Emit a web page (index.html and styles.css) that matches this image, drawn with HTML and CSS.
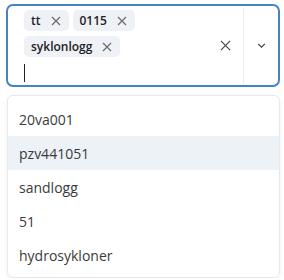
FILE: index.html
```
<!DOCTYPE html>
<html>
<head>
<meta charset="utf-8">
<link rel="stylesheet" href="styles.css">
</head>
<body>
<div class="select">
  <div class="values">
    <span class="chip"><span class="chip-label">tt</span><svg class="chip-x" viewBox="0 0 10 10"><path d="M1 1L9 9M9 1L1 9"/></svg></span>
    <span class="chip"><span class="chip-label">0115</span><svg class="chip-x" viewBox="0 0 10 10"><path d="M1 1L9 9M9 1L1 9"/></svg></span>
    <span class="chip"><span class="chip-label">syklonlogg</span><svg class="chip-x" viewBox="0 0 10 10"><path d="M1 1L9 9M9 1L1 9"/></svg></span>
    <span class="input"><span class="caret"></span></span>
  </div>
  <div class="clear"><svg viewBox="0 0 12 12"><path d="M1 1L11 11M11 1L1 11"/></svg></div>
  <div class="sep"></div>
  <div class="toggle"><svg viewBox="0 0 10 6"><path d="M1 1L5 5L9 1"/></svg></div>
</div>
<ul class="menu">
  <li class="item">20va001</li>
  <li class="item active">pzv441051</li>
  <li class="item">sandlogg</li>
  <li class="item">51</li>
  <li class="item">hydrosykloner</li>
</ul>
</body>
</html>
```
FILE: styles.css
```
html, body {
  margin: 0;
  padding: 0;
  background: #fff;
}
body {
  padding: 4px 4px 0 6px;
  font-family: "Open Sans", "Noto Sans", sans-serif;
  color: #333;
}
.select {
  box-sizing: border-box;
  width: 274px;
  height: 83px;
  border: 2px solid #4583c4;
  border-radius: 7px;
  display: flex;
  align-items: stretch;
}
.values {
  width: 200px;
  box-sizing: border-box;
  padding: 4px 0 0 16px;
  display: flex;
  flex-wrap: wrap;
  align-content: flex-start;
  gap: 5px 4px;
}
.chip {
  height: 21px;
  display: inline-flex;
  align-items: center;
  gap: 10px;
  padding: 0 8px 0 7px;
  background: #eef1f5;
  border-radius: 5px;
  font-size: 12px;
  font-weight: 600;
  color: #222;
}
.chip-x {
  width: 10px;
  height: 10px;
  fill: none;
  stroke: #6b6b6b;
  stroke-width: 1.2;
}
.input {
  width: 100%;
  height: 22px;
  display: flex;
  align-items: center;
}
.caret {
  width: 1px;
  height: 18px;
  background: #222;
}
.clear {
  width: 35px;
  display: flex;
  align-items: center;
  justify-content: center;
}
.clear svg {
  width: 11px;
  height: 11px;
  fill: none;
  stroke: #444;
  stroke-width: 1.3;
}
.sep {
  width: 1px;
  margin: 2px 0 1px;
  background: #ebebeb;
}
.toggle {
  flex: 1;
  display: flex;
  align-items: center;
  justify-content: center;
  padding-left: 1px;
}
.toggle svg {
  width: 9px;
  height: 5px;
  fill: none;
  stroke: #444;
  stroke-width: 1.5;
}
.menu {
  list-style: none;
  box-sizing: border-box;
  width: 273px;
  margin: 8px 0 0 1px;
  padding: 6px 0 5px;
  border: 1px solid #e5e8ec;
  border-radius: 6px;
  box-shadow: 0 2px 5px rgba(0, 0, 0, 0.06);
}
.item {
  height: 34px;
  display: flex;
  align-items: center;
  padding-left: 11px;
  font-size: 14px;
  color: #3a3a3a;
}
.item.active {
  background: #edf2f7;
}
```
